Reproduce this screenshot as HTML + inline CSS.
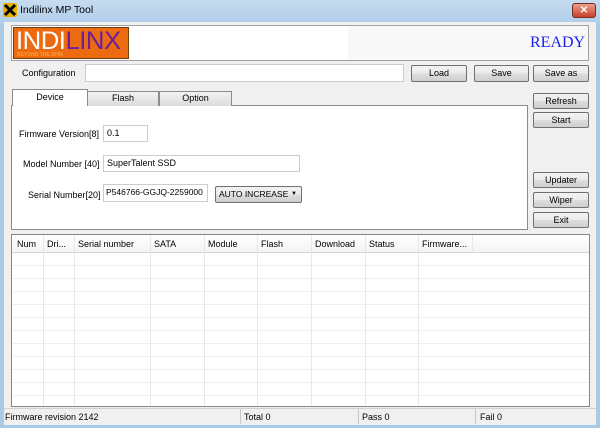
<!DOCTYPE html><html><head><style>
*{box-sizing:border-box;margin:0;padding:0}
body{width:600px;height:428px;overflow:hidden;background:#aacbe6;font-family:"Liberation Sans",sans-serif;font-size:9px;color:#000;position:relative}
.a{position:absolute}
.btn{position:absolute;border:1px solid #707070;border-radius:2px;background:linear-gradient(#f2f2f2,#ebebeb 50%,#dddddd 51%,#cfcfcf);text-align:center;font-size:9px;line-height:14px;white-space:nowrap}
.inp{position:absolute;background:#fff;border:1px solid #c5cdd6;font-size:9px;padding:2px 3px;white-space:nowrap;overflow:hidden}
.lbl{position:absolute;font-size:9px;white-space:nowrap}
.tab{position:absolute;border:1px solid #8c8c8c;border-bottom:none;background:linear-gradient(#f2f2f2,#dcdcdc);text-align:center;font-size:9px;line-height:13px}
.col{position:absolute;top:0;bottom:0;border-left:1px solid #e8e8e8}
.hd{position:absolute;top:4px;font-size:9px}
</style></head><body>
<div class="a" style="left:0;top:0;width:600px;height:24px;background:linear-gradient(#c6dcf0,#b0cde8)"></div>
<div class="a" style="left:3px;top:3px;width:14px;height:14px;background:#e8b000;border-radius:2px"><svg width="14" height="14"><path d="M2 2L12 12M12 2L2 12" stroke="#000" stroke-width="3"/></svg></div>
<div class="a" style="left:20px;top:4px;font-size:10.5px">Indilinx MP Tool</div>
<div class="a" style="left:572px;top:3px;width:24px;height:15px;background:linear-gradient(#e8a090,#c8402a);border:1px solid #7a3020;border-radius:3px;color:#fff;text-align:center;font-size:10px;line-height:13px;font-weight:bold">✕</div>
<div class="a" style="left:4px;top:22px;width:592px;height:403px;background:#f0f0f0"></div>
<div class="a" style="left:11px;top:25px;width:578px;height:36px;border:1px solid #a0a0a0;background:#fff"></div>
<div class="a" style="left:348px;top:26px;width:240px;height:34px;background:#f8f8f8"></div>
<div class="a" style="left:13px;top:27px;width:116px;height:32px;background:#ec6a10;border:1px solid #704010;overflow:hidden">
<div class="a" style="left:2px;top:-1px;font-size:25px;color:#fff;transform:scaleX(1.03);transform-origin:left top;white-space:nowrap;letter-spacing:-0.5px">INDI<span style="color:#6a1f9c">LINX</span></div>
<div class="a" style="left:3px;top:24px;font-size:5px;color:#f8a040;font-weight:bold;white-space:nowrap">BEYOND THE SPIN</div></div>
<div class="a" style="left:530px;top:34px;font-family:'Liberation Serif',serif;font-size:16px;color:#1a22e8">READY</div>
<div class="lbl" style="left:22px;top:68px">Configuration</div>
<div class="inp" style="left:85px;top:64px;width:319px;height:18px"></div>
<div class="btn" style="left:411px;top:65px;width:56px;height:17px">Load</div>
<div class="btn" style="left:474px;top:65px;width:55px;height:17px">Save</div>
<div class="btn" style="left:533px;top:65px;width:56px;height:17px">Save as</div>
<div class="a" style="left:11px;top:105px;width:517px;height:125px;border:1px solid #8c8c8c;background:#fff"></div>
<div class="tab" style="left:87px;top:91px;width:72px;height:15px">Flash</div>
<div class="tab" style="left:159px;top:91px;width:73px;height:15px">Option</div>
<div class="tab" style="left:12px;top:89px;width:76px;height:17px;background:#fff;line-height:15px">Device</div>
<div class="lbl" style="left:19px;top:129px">Firmware Version[8]</div>
<div class="inp" style="left:103px;top:125px;width:45px;height:17px">0.1</div>
<div class="lbl" style="left:23px;top:159px">Model Number [40]</div>
<div class="inp" style="left:103px;top:155px;width:197px;height:17px">SuperTalent SSD</div>
<div class="lbl" style="left:28px;top:190px">Serial Number[20]</div>
<div class="inp" style="left:103px;top:184px;width:105px;height:18px;font-size:8.5px;padding:2px 2px">P546766-GGJQ-2259000</div>
<div class="btn" style="left:215px;top:186px;width:87px;height:17px;text-align:left;padding-left:3px;line-height:15px;font-size:8.5px">AUTO INCREASE<span style="position:absolute;right:4px;font-size:6px">▼</span></div>
<div class="btn" style="left:533px;top:93px;width:56px;height:16px">Refresh</div>
<div class="btn" style="left:533px;top:112px;width:56px;height:16px">Start</div>
<div class="btn" style="left:533px;top:172px;width:56px;height:16px">Updater</div>
<div class="btn" style="left:533px;top:192px;width:56px;height:16px">Wiper</div>
<div class="btn" style="left:533px;top:212px;width:56px;height:16px">Exit</div>
<div class="a" style="left:11px;top:234px;width:579px;height:173px;border:1px solid #828790;background:#fff;overflow:hidden">
<div class="a" style="left:0;top:0;width:577px;height:18px;background:linear-gradient(#fff,#f3f4f6);border-bottom:1px solid #d5d5d5"></div>
<div class="a" style="left:0;top:18px;width:577px;height:155px;background:repeating-linear-gradient(#fff 0,#fff 12px,#efefef 12px,#efefef 13px)"></div>
<div class="col" style="left:31px"></div><div class="col" style="left:62px"></div><div class="col" style="left:138px"></div><div class="col" style="left:192px"></div><div class="col" style="left:245px"></div><div class="col" style="left:299px"></div><div class="col" style="left:353px"></div><div class="col" style="left:406px"></div><div class="col" style="left:460px;height:18px;bottom:auto"></div>
<div class="hd" style="left:5px">Num</div><div class="hd" style="left:35px">Dri...</div><div class="hd" style="left:66px">Serial number</div><div class="hd" style="left:142px">SATA</div><div class="hd" style="left:196px">Module</div><div class="hd" style="left:249px">Flash</div><div class="hd" style="left:303px">Download</div><div class="hd" style="left:357px">Status</div><div class="hd" style="left:410px">Firmware...</div>
</div>
<div class="a" style="left:4px;top:408px;width:592px;height:16px;border-top:1px solid #d0d0d0;background:#f0f0f0"></div>
<div class="lbl" style="left:5px;top:412px">Firmware revision 2142</div>
<div class="a" style="left:240px;top:409px;width:1px;height:15px;background:#c8c8c8"></div>
<div class="lbl" style="left:244px;top:412px">Total 0</div>
<div class="a" style="left:358px;top:409px;width:1px;height:15px;background:#c8c8c8"></div>
<div class="lbl" style="left:362px;top:412px">Pass 0</div>
<div class="a" style="left:475px;top:409px;width:1px;height:15px;background:#c8c8c8"></div>
<div class="lbl" style="left:480px;top:412px">Fail 0</div>
</body></html>
